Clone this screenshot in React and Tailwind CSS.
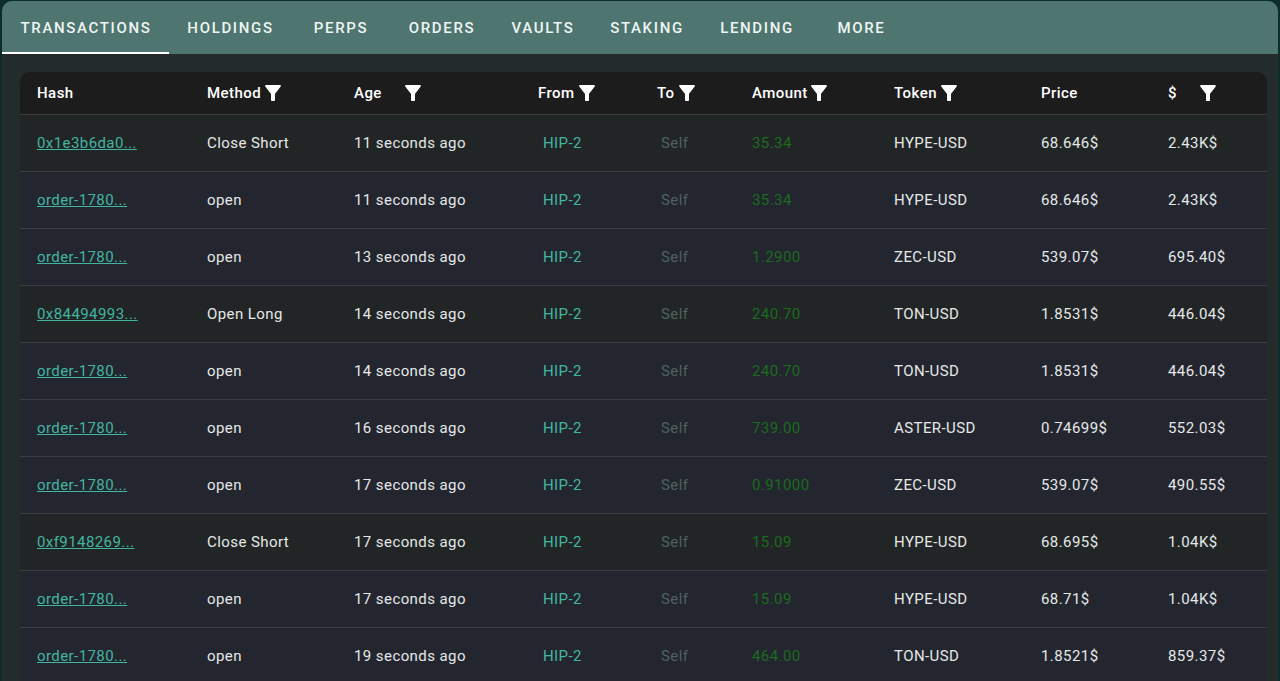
const tabs = [
  ['TRANSACTIONS', 'w-[167px]'],
  ['HOLDINGS', 'w-[123px]'],
  ['PERPS', 'w-[98px]'],
  ['ORDERS', 'w-[104px]'],
  ['VAULTS', 'w-[98px]'],
  ['STAKING', 'w-[110px]'],
  ['LENDING', 'w-[110px]'],
  ['MORE', 'w-[99px]'],
]

const rows = [
  ['0x1e3b6da0...', 'Close Short', '11 seconds ago', '35.34', 'HYPE-USD', '68.646$', '2.43K$', true],
  ['order-1780...', 'open', '11 seconds ago', '35.34', 'HYPE-USD', '68.646$', '2.43K$'],
  ['order-1780...', 'open', '13 seconds ago', '1.2900', 'ZEC-USD', '539.07$', '695.40$'],
  ['0x84494993...', 'Open Long', '14 seconds ago', '240.70', 'TON-USD', '1.8531$', '446.04$', true],
  ['order-1780...', 'open', '14 seconds ago', '240.70', 'TON-USD', '1.8531$', '446.04$'],
  ['order-1780...', 'open', '16 seconds ago', '739.00', 'ASTER-USD', '0.74699$', '552.03$'],
  ['order-1780...', 'open', '17 seconds ago', '0.91000', 'ZEC-USD', '539.07$', '490.55$'],
  ['0xf9148269...', 'Close Short', '17 seconds ago', '15.09', 'HYPE-USD', '68.695$', '1.04K$', true],
  ['order-1780...', 'open', '17 seconds ago', '15.09', 'HYPE-USD', '68.71$', '1.04K$'],
  ['order-1780...', 'open', '19 seconds ago', '464.00', 'TON-USD', '1.8521$', '859.37$'],
]

const gridCols = 'grid grid-cols-[170px_147px_184px_119px_95px_142px_147px_127px_116px]'

function Funnel({ className = '' }) {
  return (
    <svg viewBox="0 0 24 24" width="24" height="24" fill="#fff" className={className}>
      <path d="M4.25 5.61C6.27 8.2 10 13 10 13v6c0 .55.45 1 1 1h2c.55 0 1-.45 1-1v-6s3.72-4.8 5.74-7.39c.51-.66.04-1.61-.79-1.61H5.04c-.83 0-1.3.95-.79 1.61z" />
    </svg>
  )
}

function HeadCell({ label, filter, gap = 'ml-0' }) {
  return (
    <div className="flex items-center pl-[17px]">
      <span>{label}</span>
      {filter && <Funnel className={gap} />}
    </div>
  )
}

export default function App() {
  return (
    <div className="h-[681px] w-[1280px] overflow-hidden bg-[#0c2d2a] pl-[2px] pr-[2px] pt-[1px] font-['Roboto',sans-serif]">
      <div className="h-[680px] overflow-hidden rounded-t-[10px] bg-[#232b2b]">
        <div className="flex h-[53px] bg-[#4e756f] pl-[1px] text-[15px] font-medium tracking-[0.11em] text-[#eef5f3]">
          {tabs.map(([label, width], i) => (
            <div
              key={label}
              className={`flex items-center justify-center pt-[3px] ${width} ${i === 0 ? '-ml-[1px] border-b-2 border-white pl-[1px]' : 'border-b-2 border-transparent'}`}
            >
              {label}
            </div>
          ))}
        </div>

        <div className="ml-[18px] mt-[18px] w-[1247px] overflow-hidden rounded-t-[10px]">
          <div className={`${gridCols} h-[43px] items-center border-b border-[#3a3a3a] bg-[#1c1c1c] text-[15px] font-medium tracking-[0.03em] text-white`}>
            <HeadCell label="Hash" />
            <HeadCell label="Method" filter />
            <HeadCell label="Age" filter gap="ml-[19px]" />
            <HeadCell label="From" filter />
            <HeadCell label="To" filter />
            <HeadCell label="Amount" filter gap="-ml-[1px]" />
            <HeadCell label="Token" filter />
            <HeadCell label="Price" />
            <HeadCell label="$" filter gap="ml-[19px]" />
          </div>

          {rows.map((row, i) => (
            <div
              key={i}
              className={`${gridCols} h-[57px] items-center border-b border-[#3a3d42] text-[15px] tracking-[0.028em] text-[#e6e8e8] ${row[7] ? 'bg-[#212526]' : 'bg-[#23262f]'}`}
            >
              <a className="pl-[17px] text-[#42b5a1] underline">{row[0]}</a>
              <div className="pl-[17px]">{row[1]}</div>
              <div className="pl-[17px]">{row[2]}</div>
              <div className="pl-[22px] text-[#42b5a1]">HIP-2</div>
              <div className="pl-[21px] text-[#4f625f]">Self</div>
              <div className="pl-[17px] text-[#1c6b1f]">{row[3]}</div>
              <div className="pl-[17px]">{row[4]}</div>
              <div className="pl-[17px]">{row[5]}</div>
              <div className="pl-[17px]">{row[6]}</div>
            </div>
          ))}
        </div>
      </div>
    </div>
  )
}
